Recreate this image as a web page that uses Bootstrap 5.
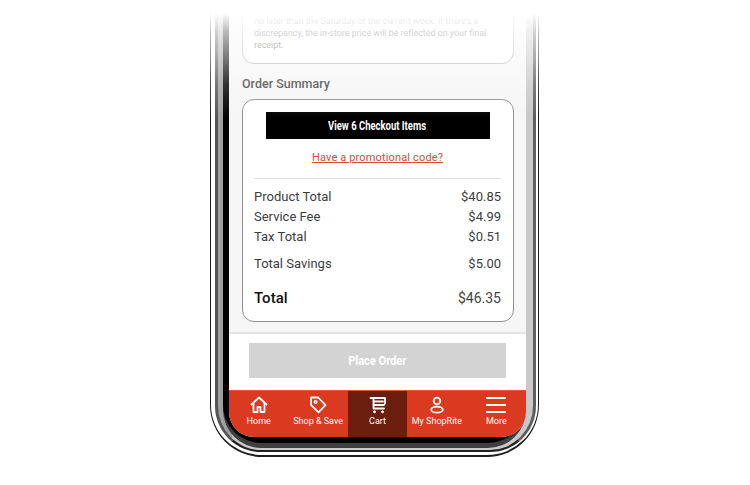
<!DOCTYPE html>
<html lang="en">
<head>
<meta charset="utf-8">
<title>Order Summary</title>
<link rel="stylesheet" href="https://cdn.jsdelivr.net/npm/bootstrap@5.3.0/dist/css/bootstrap.min.css">
<style>
html,body{height:485px;overflow:hidden;background:#fff;font-family:Roboto,"Liberation Sans",sans-serif;}
.stage{width:750px;height:485px;padding-left:210px;position:relative;}
.shell{width:329px;height:457px;background:#fff;border:solid #1c1c1c;border-width:0 1px 2px 1px;border-radius:0 0 52px 52px;padding:0 2px 3px 4px;}
.rim{height:100%;background:linear-gradient(to right,#a0a0a0 0,#a0a0a0 14px,#c8c8c8 14px);border-style:solid;border-color:#4a4a4a #5e5e5e #222 #555;border-width:0 3px 2px 3px;border-radius:0 0 46px 46px;padding:0 7px 7px 5px;}
.bezel{height:100%;background:#000;border-radius:0 0 38px 38px;padding:0 0 5px 6px;box-shadow:0 5px 0 #3f3f3f;}
.screen{height:437px;border-radius:0 0 25px 25px;overflow:hidden;background:#fff;}
.scroll-area{height:333px;background:#f6f6f6;padding:0 12px 11px 13px;box-shadow:inset 0 -1px 0 #e4e4e4;}
.panel{background:#fff;border:1px solid #b9b9b9;border-radius:12px;}
.notice{height:64px;padding:0 11px;font-size:9px;line-height:12px;color:#666;letter-spacing:-.05px;}
.notice p{margin:0;padding-bottom:12px;}
.section-title{font-size:12.5px;font-weight:500;line-height:16px;color:#444;margin:12px 0 7px;}
.summary{height:223px;padding:12px 12px 0 11px;border-color:#8f8f8f;}
.checkout-btn{display:block;width:224px;height:27px;margin:0 auto;padding:0;background:#000;color:#fff;border:0;border-radius:0;font-size:12px;font-weight:700;line-height:28px;}
.checkout-btn:hover{background:#000;color:#fff;}
.squeeze{display:inline-block;transform:scaleX(.85);white-space:nowrap;}
.checkout-btn .squeeze{transform:scaleX(.79);}
.promo{display:block;text-align:center;color:#d9493a;font-size:11px;line-height:14px;margin:12px 0 13px;letter-spacing:.15px;}
.divider{border-top:1px solid #ddd;margin:0 0 8px;opacity:1;}
.line{font-size:13px;line-height:20px;color:#3d3d3d;}
.line.gap-top{margin-top:7px;}
.line.grand{margin-top:14px;font-size:14px;color:#444;}
.line.grand strong{color:#111;font-weight:500;font-size:15px;}
.footer-bar{height:57px;background:#fff;padding:10px 20px 0;box-shadow:inset 0 1px 0 #e2e2e2;}
.place-btn,.place-btn:disabled{display:block;width:257px;height:35px;padding:0;background:#d3d3d3;color:#fff;border:0;border-radius:0;font-size:13px;font-weight:700;line-height:36px;opacity:1;}
.tabbar{height:47px;background:#d93a20;border-top:1px solid #e8533b;}
.tab{flex:1 1 0;min-width:0;height:46px;color:#fff;font-size:9px;font-weight:400;line-height:11px;text-align:center;padding-top:4px;white-space:nowrap;}
.tab svg{display:block;margin:0 auto 1px;width:20px;height:20px;stroke:#fff;fill:none;stroke-width:1.8;stroke-linecap:round;stroke-linejoin:round;}
.tab.active{background:#6b1e0e;}
.fade-top{position:absolute;left:200px;top:0;width:350px;height:118px;pointer-events:none;background:linear-gradient(to bottom,#fff 0,#fff 13px,rgba(255,255,255,.72) 32px,rgba(255,255,255,.45) 60px,rgba(255,255,255,.2) 84px,rgba(255,255,255,0) 118px);}
</style>
</head>
<body class="m-0">
<div class="stage">
  <div class="shell">
    <div class="rim">
      <div class="bezel">
        <div class="screen d-flex flex-column">
          <div class="scroll-area">
            <div class="panel notice d-flex flex-column justify-content-end">
              <p>no later than the Saturday of the current week. If there's a discrepancy, the in-store price will be reflected on your final receipt.</p>
            </div>
            <div class="section-title">Order Summary</div>
            <div class="panel summary">
              <button type="button" class="btn checkout-btn"><span class="squeeze">View 6 Checkout Items</span></button>
              <a href="#" class="promo">Have a promotional code?</a>
              <hr class="divider">
              <div class="line d-flex justify-content-between"><span>Product Total</span><span>$40.85</span></div>
              <div class="line d-flex justify-content-between"><span>Service Fee</span><span>$4.99</span></div>
              <div class="line d-flex justify-content-between"><span>Tax Total</span><span>$0.51</span></div>
              <div class="line gap-top d-flex justify-content-between"><span>Total Savings</span><span>$5.00</span></div>
              <div class="line grand d-flex justify-content-between"><strong>Total</strong><span>$46.35</span></div>
            </div>
          </div>
          <div class="footer-bar">
            <button type="button" class="btn place-btn" disabled><span class="squeeze">Place Order</span></button>
          </div>
          <nav class="tabbar d-flex">
            <div class="tab">
              <svg viewBox="0 0 20 20"><path d="M2.500 9.500 10 2.500l7.500 7"/><path d="M4.500 8v9h4v-5h3v5h4V8"/></svg>
              Home
            </div>
            <div class="tab">
              <svg viewBox="0 0 20 20"><path d="M3 2.500h7.200l7.300 7.600-7 7.200L3 9.800z"/><circle cx="7.600" cy="7" r="1.300" stroke-width="1.500"/></svg>
              Shop &amp; Save
            </div>
            <div class="tab active">
              <svg viewBox="0 0 20 20"><path d="M2.500 3h14.500v5.500l-1 1.500H6"/><path d="M5.500 3v10.500h10.500"/><path d="M6 6.500h9"/><circle cx="6.500" cy="16.800" r="1" fill="#fff" stroke-width="1"/><circle cx="14.500" cy="16.800" r="1" fill="#fff" stroke-width="1"/></svg>
              Cart
            </div>
            <div class="tab">
              <svg viewBox="0 0 20 20"><circle cx="10" cy="6" r="3.300"/><ellipse cx="10" cy="14.700" rx="5.800" ry="3"/></svg>
              My ShopRite
            </div>
            <div class="tab">
              <svg viewBox="0 0 20 20"><path d="M0 3h20M0 10h20M0 17h20" stroke-linecap="butt" stroke-width="2"/></svg>
              More
            </div>
          </nav>
        </div>
      </div>
    </div>
  </div>
  <div class="fade-top"></div>
</div>
<script src="https://cdn.jsdelivr.net/npm/bootstrap@5.3.0/dist/js/bootstrap.bundle.min.js"></script>
</body>
</html>
